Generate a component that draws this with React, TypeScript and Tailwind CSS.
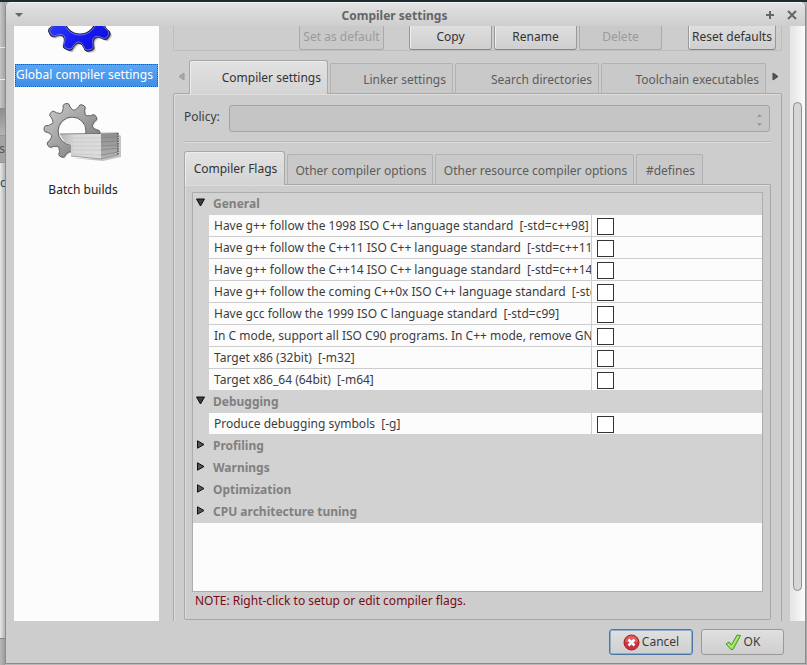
import React, { useState } from "react";

function polar(cx: number, cy: number, r: number, deg: number) {
  const a = (deg * Math.PI) / 180;
  return `${(cx + r * Math.cos(a)).toFixed(2)} ${(cy + r * Math.sin(a)).toFixed(2)}`;
}

function gearPath(cx: number, cy: number, tip: number, root: number, hole: number, teeth: number, phase: number) {
  const step = 360 / teeth;
  let d = "";
  for (let i = 0; i < teeth; i++) {
    const a = phase + i * step;
    d += `${i === 0 ? "M" : "L"}${polar(cx, cy, root + 2, a - step * 0.3)}`;
    d += `L${polar(cx, cy, tip - 4, a - step * 0.23)}`;
    d += `Q${polar(cx, cy, tip, a - step * 0.21)} ${polar(cx, cy, tip, a - step * 0.08)}`;
    d += `L${polar(cx, cy, tip, a + step * 0.08)}`;
    d += `Q${polar(cx, cy, tip, a + step * 0.21)} ${polar(cx, cy, tip - 4, a + step * 0.23)}`;
    d += `L${polar(cx, cy, root + 2, a + step * 0.3)}`;
    d += `Q${polar(cx, cy, root - 2, a + step * 0.5)} ${polar(cx, cy, root + 2, a + step * 0.7)}`;
  }
  d += `Z M${cx - hole} ${cy}a${hole} ${hole} 0 1 0 ${hole * 2} 0a${hole} ${hole} 0 1 0 ${-hole * 2} 0Z`;
  return d;
}

function BlueGear() {
  return (
    <svg width="84" height="30" viewBox="41 26 84 30" aria-hidden="true">
      <defs>
        <linearGradient id="blue" x1="0" y1="0" x2="1" y2="1">
          <stop offset="0" stopColor="#4a60ff" />
          <stop offset="0.6" stopColor="#1a1cf4" />
          <stop offset="1" stopColor="#0808d0" />
        </linearGradient>
      </defs>
      <path d={gearPath(82, 20, 34, 25, 16, 9, 33)} fill="#777" fillRule="evenodd" opacity="0.35" />
      <path d={gearPath(81, 19, 34, 25, 16, 9, 33)} fill="#444" fillRule="evenodd" opacity="0.6" />
      <path d={gearPath(80, 18, 34, 25, 16, 9, 33)} fill="url(#blue)" fillRule="evenodd" stroke="#20203a" strokeWidth="1.2" />
      <path d={gearPath(80, 18, 33, 24, 17, 9, 33)} fill="none" stroke="#8a94ff" strokeWidth="0.7" />
    </svg>
  );
}

function BatchIcon() {
  return (
    <svg width="90" height="66" viewBox="38 99 90 66" aria-hidden="true">
      <defs>
        <linearGradient id="steel" x1="0" y1="0" x2="1" y2="1">
          <stop offset="0" stopColor="#cccccc" />
          <stop offset="0.5" stopColor="#a0a0a0" />
          <stop offset="1" stopColor="#6c6c6c" />
        </linearGradient>
        <linearGradient id="paper" x1="0" y1="0" x2="1" y2="0">
          <stop offset="0" stopColor="#b4b4b4" />
          <stop offset="0.35" stopColor="#d8d8d8" />
          <stop offset="1" stopColor="#dcdcdc" />
        </linearGradient>
        <linearGradient id="spine" x1="0" y1="0" x2="0" y2="1">
          <stop offset="0" stopColor="#8c8c8c" />
          <stop offset="1" stopColor="#b4b4b4" />
        </linearGradient>
      </defs>
      <path d={gearPath(73, 132, 28, 21, 14, 10, 5)} fill="#bbb" fillRule="evenodd" opacity="0.6" />
      <path d={gearPath(72, 131, 28, 21, 14, 10, 5)} fill="url(#steel)" fillRule="evenodd" stroke="#626262" strokeWidth="1" />
      <path d="M100 134H122V161H72V156H100Z" fill="#fcfcfc" />
      <path d="M72 158L103 161L121 157V136L118 134V155L101 159Z" fill="#c4c4c4" />
      <path d="M60 134H101V159L71 156V145Q64 144 60 134Z" fill="url(#paper)" />
      <path d="M101 134L118 133V155L101 159Z" fill="url(#spine)" />
      <path d="M66 138H101M70 142H101M72 146H101M72 150H101M72 154L101 155" stroke="#c4c4c4" strokeWidth="0.7" />
      <path d="M101 138L118 137M101 142L118 141M101 146L118 145M101 150L118 148M101 155L118 152" stroke="#808080" strokeWidth="0.7" />
      <path d="M60 134L118 133" stroke="#707070" strokeWidth="0.8" />
      <path d="M118 133v22" stroke="#555" strokeWidth="1.4" strokeDasharray="1.5 1" />
      <path d="M71 156L101 159L118 155" fill="none" stroke="#8a8a8a" strokeWidth="0.8" />
    </svg>
  );
}

const sections = [
  {
    name: "General",
    open: true,
    flags: [
      "Have g++ follow the 1998 ISO C++ language standard  [-std=c++98]",
      "Have g++ follow the C++11 ISO C++ language standard  [-std=c++11]",
      "Have g++ follow the C++14 ISO C++ language standard  [-std=c++14]",
      "Have g++ follow the coming C++0x ISO C++ language standard  [-std=c++0x]",
      "Have gcc follow the 1999 ISO C language standard  [-std=c99]",
      "In C mode, support all ISO C90 programs. In C++ mode, remove GNU extensions",
      "Target x86 (32bit)  [-m32]",
      "Target x86_64 (64bit)  [-m64]",
    ],
  },
  { name: "Debugging", open: true, flags: ["Produce debugging symbols  [-g]"] },
  { name: "Profiling", open: false, flags: [] },
  { name: "Warnings", open: false, flags: [] },
  { name: "Optimization", open: false, flags: [] },
  { name: "CPU architecture tuning", open: false, flags: [] },
];

function Section({ name, open, flags }: { name: string; open: boolean; flags: string[] }) {
  const [shown, setShown] = useState(open);
  return (
    <tbody>
      <tr className="h-[22px] bg-[#d2d2d2]">
        <th colSpan={3} className="p-0 text-left">
          <button
            type="button"
            aria-expanded={shown}
            onClick={() => setShown(!shown)}
            className="flex h-[22px] w-full items-center gap-2 pl-[3px] font-bold text-[#808080]"
          >
            <svg className="mb-[3px]" width="9" height="9" viewBox="0 0 9 9" aria-hidden="true">
              {shown ? (
                <path d="M0.5 1H8.5L4.500 8Z" fill="#3c3c3c" stroke="#111" />
              ) : (
                <path d="M1.5 0.8V8.2L8 4.500Z" fill="#555" stroke="#111" />
              )}
            </svg>
            {name}
          </button>
        </th>
      </tr>
      {shown &&
        flags.map((flag, i) => {
          const line = i < flags.length - 1 ? "border-b border-b-[#cdcdcd]" : "border-b border-b-[#d2d2d2]";
          const id = `${name}-${i}`;
          return (
            <tr key={flag} className="h-[22px]">
              <td className="bg-[#d2d2d2] p-0" />
              <td className={`overflow-hidden border-r border-r-[#cdcdcd] bg-[#fcfcfc] p-0 pl-[5px] ${line}`}>
                <label htmlFor={id} className="block h-[21px] overflow-hidden leading-[21px] whitespace-pre">
                  {flag}
                </label>
              </td>
              <td className={`bg-[#fcfcfc] p-0 pl-[5px] align-top ${line}`}>
                <input
                  id={id}
                  type="checkbox"
                  className="mt-[3px] block size-[17px] appearance-none border border-[#333] bg-white checked:bg-[#4a90d9]"
                />
              </td>
            </tr>
          );
        })}
    </tbody>
  );
}

const clipped = "flex h-6 items-center justify-center rounded-b-[3px] border border-t-0 pb-[2px] whitespace-nowrap";
const enabledBtn =
  "border-[#999] border-b-[#858585] bg-gradient-to-b from-[#dedede] to-[#cfcfcf] shadow-[inset_1px_0_0_#eee] text-[#333]";
const disabledBtn = "border-[#aaa] bg-[#c9c9c9] text-[#9b9b9b]";

const activeTab =
  "relative z-10 -mb-px h-[34px] rounded-t-[3px] border border-b-0 border-[#a8a8a8] bg-gradient-to-b from-[#e2e2e2] to-[#d4d4d4] text-[#333] shadow-[inset_1px_1px_0_#ececec]";
const idleTab =
  "h-[30px] rounded-t-[2px] border border-b-0 border-[#b2b2b2] bg-[#c9c9c9] pt-[3px] text-[#5c5c5c]";

export default function App() {
  return (
    <div className="flex min-h-screen flex-col bg-[#b9b9b9] font-['Noto_Sans','Open_Sans',sans-serif] text-[12px] leading-4 text-[#3c3c3c]">
      <div className="h-[2px] bg-[#1d2c30]" />
      <div className="flex flex-1">
        <div className="flex w-[5px] flex-col overflow-hidden" aria-hidden="true">
          <div className="h-[45px] bg-gradient-to-r from-[#c8c8c8] to-[#a4a4a4]" />
          <div className="h-8 border-t border-[#e4e4e4] bg-gradient-to-r from-[#c4c4c4] to-[#a4a4a4]" />
          <div className="h-[30px] border-y border-t-[#eeeeee] border-b-[#8c8c8c] bg-gradient-to-r from-[#c8c8c8] to-[#a4a4a4]" />
          <div className="h-[26px] bg-gradient-to-b from-[#8e8e8e] to-[#b4b4b4]" />
          <div className="flex h-7 items-center justify-end border-y border-[#959595] bg-[#a4a4a4] text-[#555]">ls</div>
          <div className="flex-1 bg-gradient-to-r from-[#e8e8e8] to-[#b4b4b4] pt-3 text-[#234a60]">c</div>
          <div className="h-[27px] border-t border-[#858585] bg-gradient-to-r from-[#b8b8b8] to-[#9c9c9c]" />
        </div>
        <main className="mb-px flex min-w-0 flex-1 flex-col rounded-t-[5px] border border-t-0 border-[#8c8c8c] bg-[#cdcdcd]">
          <header className="flex h-6 items-center rounded-t-[5px] border-t border-[#f4f4f4] bg-gradient-to-b from-[#e2e2e2] to-[#cecece] px-2">
            <button type="button" aria-label="Window menu" className="flex w-[10px] items-center">
              <svg width="10" height="6" viewBox="0 0 10 6" aria-hidden="true">
                <path d="M1 1H9L5 5Z" fill="#666" />
              </svg>
            </button>
            <h1 className="flex-1 pt-[2px] text-center text-[12px] font-bold text-[#666]">Compiler settings</h1>
            <div className="flex w-8 items-center justify-between">
              <button type="button" aria-label="Maximize">
                <svg width="10" height="10" viewBox="0 0 10 10" aria-hidden="true">
                  <path d="M5 1V9M1 5H9" stroke="#666" strokeWidth="2" />
                </svg>
              </button>
              <button type="button" aria-label="Close">
                <svg width="10" height="10" viewBox="0 0 10 10" aria-hidden="true">
                  <path d="M1 1L9 9M9 1L1 9" stroke="#666" strokeWidth="2" />
                </svg>
              </button>
            </div>
          </header>

          <div className="flex flex-1 pl-2">
            <nav className="w-[145px] shrink-0 bg-[#fcfcfc]">
              <a href="#global" className="flex flex-col">
                <span className="ml-[27px]">
                  <BlueGear />
                </span>
                <span className="mx-px mt-2 h-[23px] border border-dotted border-[#1f5fa8] bg-gradient-to-b from-[#5aa6f5] to-[#3f8fe8] leading-[19px] whitespace-nowrap text-white">
                  Global compiler settings
                </span>
              </a>
              <a href="#batch" className="mt-3 flex w-[138px] flex-col items-center text-[#222]">
                <BatchIcon />
                <span className="mt-[17px]">Batch builds</span>
              </a>
            </nav>

            <section className="ml-[14px] flex min-w-0 flex-1 flex-col">
              <div className="flex h-[25px] items-start justify-end rounded-b-[2px] border border-t-0 border-[#bdbdbd] pr-[5px]">
                <button type="button" disabled className={`${clipped} ${disabledBtn} mr-[25px] w-[85px]`}>Set as default</button>
                <button type="button" className={`${clipped} ${enabledBtn} mr-[2px] w-[83px]`}>Copy</button>
                <button type="button" className={`${clipped} ${enabledBtn} mr-[2px] w-[83px]`}>Rename</button>
                <button type="button" disabled className={`${clipped} ${disabledBtn} mr-[26px] w-[83px]`}>Delete</button>
                <button type="button" className={`${clipped} ${enabledBtn} w-[88px]`}>Reset defaults</button>
              </div>

              <div className="mt-2 flex items-end">
                <button type="button" aria-label="Previous tabs" className="flex h-[34px] w-4 items-center justify-center">
                  <svg width="7" height="9" viewBox="0 0 7 9" aria-hidden="true">
                    <path d="M6 1V8L1 4.500Z" fill="#aaa" stroke="#999" />
                  </svg>
                </button>
                <div role="tablist" aria-label="Settings" className="flex flex-1 items-end gap-[2px]">
                  <button type="button" role="tab" aria-selected="true" className={`${activeTab} w-[139px] pr-[6px] text-right`}>Compiler settings</button>
                  <button type="button" role="tab" aria-selected="false" className={`${idleTab} w-[123px] pr-[6px] text-right`}>Linker settings</button>
                  <button type="button" role="tab" aria-selected="false" className={`${idleTab} w-[144px] pr-[6px] text-right`}>Search directories</button>
                  <button type="button" role="tab" aria-selected="false" className={`${idleTab} w-[165px] pr-[6px] text-right`}>Toolchain executables</button>
                </div>
                <button type="button" aria-label="Next tabs" className="flex h-[34px] w-4 items-center justify-center pl-[3px]">
                  <svg width="7" height="9" viewBox="0 0 7 9" aria-hidden="true">
                    <path d="M1 1V8L6 4.500Z" fill="#555" stroke="#444" />
                  </svg>
                </button>
              </div>

              <div className="flex flex-1 flex-col rounded-t-[2px] border border-b-0 border-[#a8a8a8] bg-[#cdcdcd] px-[10px] pt-[11px] pb-[1px] shadow-[inset_1px_1px_0_#dedede]">
                <div className="flex items-center">
                  <label htmlFor="policy" className="w-[45px] pb-1">Policy:</label>
                  <div className="relative mr-[1px] flex-1">
                    <select id="policy" disabled className="block h-[27px] w-full appearance-none rounded-[3px] border border-[#a4a4a4] bg-[#c5c5c5]" />
                    <svg className="pointer-events-none absolute top-2 right-[7px]" width="7" height="13" viewBox="0 0 7 13" aria-hidden="true">
                      <path d="M1 4L3.500 1L6 4ZM1 10L3.500 13L6 10Z" fill="#9a9a9a" />
                    </svg>
                  </div>
                </div>
                <hr className="mt-[9px] border-[#b8b8b8] shadow-[0_1px_0_#dcdcdc]" />

                <div role="tablist" aria-label="Compiler" className="mt-[9px] flex items-end gap-[2px]">
                  <button type="button" role="tab" aria-selected="true" className={`${activeTab} w-[101px] pl-[2px]`}>Compiler Flags</button>
                  <button type="button" role="tab" aria-selected="false" className={`${idleTab} w-[146px] pl-[2px]`}>Other compiler options</button>
                  <button type="button" role="tab" aria-selected="false" className={`${idleTab} w-[199px] pl-[2px]`}>Other resource compiler options</button>
                  <button type="button" role="tab" aria-selected="false" className={`${idleTab} w-[67px] pl-[2px]`}>#defines</button>
                </div>

                <div className="flex flex-1 flex-col rounded-b-[2px] border border-[#a8a8a8] px-[7px] pt-[7px] pb-[10px] shadow-[inset_1px_1px_0_#dedede]">
                  <div className="flex-1 border border-[#adadad] bg-[#fcfcfc]">
                    <table className="w-full table-fixed border-separate border-spacing-0">
                      <colgroup>
                        <col className="w-4" />
                        <col className="w-[383px]" />
                        <col />
                      </colgroup>
                      {sections.map((s) => (
                        <Section key={s.name} {...s} />
                      ))}
                    </table>
                  </div>
                  <p className="pt-px pl-[3px] text-[#7a0a18]">NOTE: Right-click to setup or edit compiler flags.</p>
                </div>
              </div>
            </section>

            <div className="ml-2 flex w-[15px] shrink-0 flex-col items-center bg-gradient-to-r from-[#e4e4e4] to-[#fbfbfb] pt-[76px] pb-[30px]">
              <div className="w-[9px] flex-1 rounded-full border border-[#8e8e8e] bg-[#d6d6d6]" />
            </div>
          </div>

          <footer className="flex h-[42px] items-center justify-end gap-2 pr-[21px]">
            <button type="button" className="flex h-[26px] w-[84px] items-center justify-center gap-[2px] rounded-[3px] border border-[#4a76aa] bg-gradient-to-b from-[#e0e0e0] to-[#cfcfcf] shadow-[inset_0_0_0_1px_#8eaccc]">
              <svg width="17" height="17" viewBox="0 0 17 17" aria-hidden="true">
                <circle cx="8.500" cy="8.500" r="7.500" fill="#cc3040" stroke="#a01c28" />
                <path d="M2 8A6.500 6.500 0 0 1 15 8Q8 10 2 8Z" fill="#e77a70" opacity="0.6" />
                <path d="M5.500 5.500L11.500 11.500M11.500 5.500L5.500 11.500" stroke="#fff" strokeWidth="2.500" />
              </svg>
              Cancel
            </button>
            <button type="button" className="flex h-[26px] w-[83px] items-center justify-center gap-[2px] rounded-[3px] border border-[#999] bg-gradient-to-b from-[#e0e0e0] to-[#cfcfcf]">
              <svg width="17" height="17" viewBox="0 0 17 17" aria-hidden="true">
                <path d="M1 10L4 8L6.500 11L12 1L15.500 1.500L8 15.500H6Z" fill="#8fe04c" stroke="#4a9a20" strokeLinejoin="round" />
                <path d="M3 10L6.500 13.500L13.500 2" fill="none" stroke="#c8f5a0" strokeWidth="0.8" />
              </svg>
              OK
            </button>
          </footer>
        </main>
        <div className="w-px bg-[#a8a8a8]" />
      </div>
    </div>
  );
}
